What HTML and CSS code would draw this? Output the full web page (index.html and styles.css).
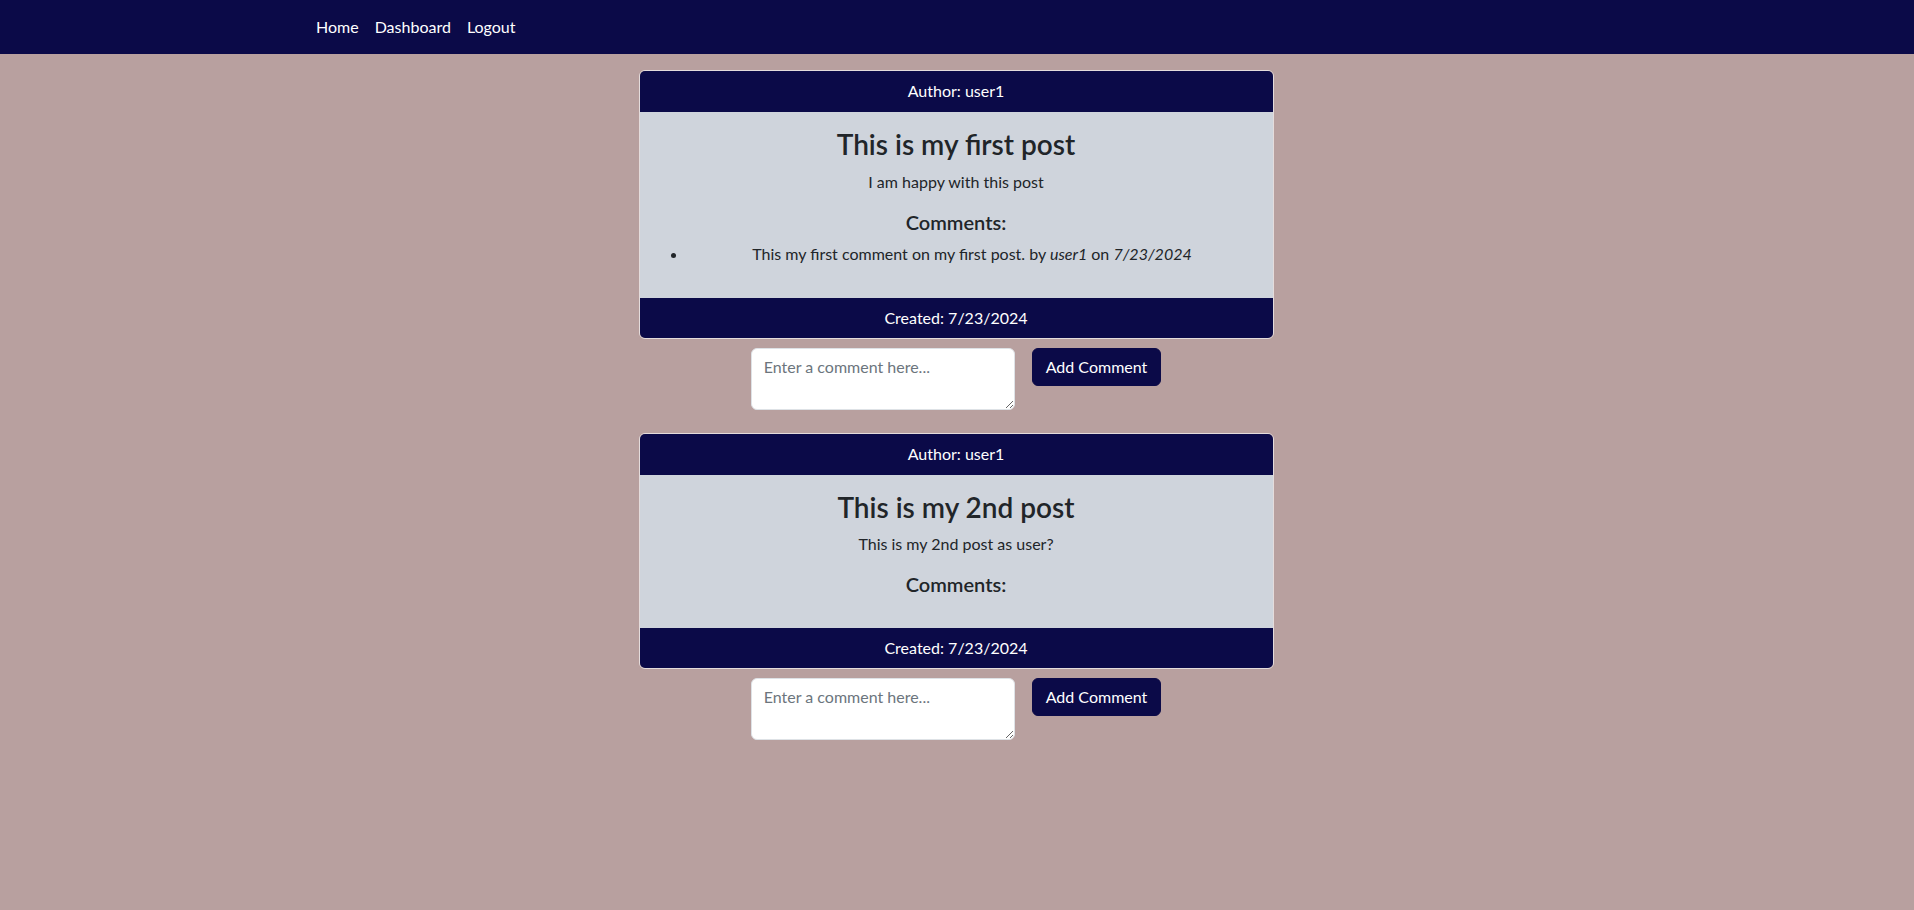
FILE: index.html
```html
<!DOCTYPE html>
<html lang="en">
<head>
<meta charset="utf-8">
<title>Posts</title>
<link rel="stylesheet" href="styles.css">
</head>
<body>
<nav class="navbar">
  <div class="nav-inner">
    <a class="nav-link" href="#">Home</a>
    <a class="nav-link" href="#">Dashboard</a>
    <a class="nav-link" href="#">Logout</a>
  </div>
</nav>
<main class="posts">
  <section class="post">
    <div class="card">
      <div class="card-header">Author: user1</div>
      <div class="card-body">
        <h3 class="post-title">This is my first post</h3>
        <p class="post-text">I am happy with this post</p>
        <h5 class="comments-title">Comments:</h5>
        <ul class="comments">
          <li>This my first comment on my first post. by <em>user1</em> on <em>7/23/2024</em></li>
        </ul>
      </div>
      <div class="card-footer">Created: 7/23/2024</div>
    </div>
    <form class="comment-form">
      <textarea class="comment-input" rows="2" placeholder="Enter a comment here..."></textarea>
      <button class="btn" type="button">Add Comment</button>
    </form>
  </section>
  <section class="post">
    <div class="card">
      <div class="card-header">Author: user1</div>
      <div class="card-body">
        <h3 class="post-title">This is my 2nd post</h3>
        <p class="post-text">This is my 2nd post as user?</p>
        <h5 class="comments-title">Comments:</h5>
        <ul class="comments"></ul>
      </div>
      <div class="card-footer">Created: 7/23/2024</div>
    </div>
    <form class="comment-form">
      <textarea class="comment-input" rows="2" placeholder="Enter a comment here..."></textarea>
      <button class="btn" type="button">Add Comment</button>
    </form>
  </section>
</main>
</body>
</html>
```

FILE: styles.css
```css
* { box-sizing: border-box; }

html, body {
  margin: 0;
  padding: 0;
}

body {
  min-height: 100vh;
  background: #b8a09f;
  color: #212529;
  font-family: "Segoe UI", "Lato", "Noto Sans", sans-serif;
  font-size: 16px;
  line-height: 1.5;
}

.navbar {
  background: #0b0a48;
  height: 54px;
  display: flex;
  align-items: center;
}

.nav-inner {
  width: 1320px;
  margin: 0 auto;
  padding: 0 11px;
  display: flex;
}

.nav-link {
  color: #ffffff;
  text-decoration: none;
  padding: 8px;
}

.posts {
  display: flex;
  flex-direction: column;
  align-items: center;
  padding-top: 16px;
  gap: 23px;
}

.post {
  width: 635px;
  display: flex;
  flex-direction: column;
  align-items: center;
  gap: 9px;
  margin-left: -2px;
}

.card {
  width: 100%;
  border: 1px solid #e4dcdc;
  border-radius: 6px;
  overflow: hidden;
  text-align: center;
}

.card-header,
.card-footer {
  background: #0b0a48;
  color: #ffffff;
  padding: 8px 16px;
}

.card-header { padding-bottom: 9px; }

.card-body {
  background: #cfd4dc;
  padding: 16px;
}

.post-title {
  margin: 0 0 8px;
  font-size: 28px;
  font-weight: 600;
  line-height: 1.2;
}

.post-text {
  margin: 0 0 16px;
}

.comments-title {
  margin: 0 0 8px;
  font-size: 20px;
  font-weight: 600;
  line-height: 1.2;
}

.comments {
  margin: 0 0 16px;
  padding-left: 32px;
}

.comment-form {
  display: flex;
  align-items: flex-start;
  gap: 17px;
}

.comment-input {
  width: 264px;
  height: 62px;
  padding: 6px 12px;
  font: inherit;
  color: #212529;
  background: #ffffff;
  border: 1px solid #dee2e6;
  border-radius: 6px;
  resize: vertical;
}

.comment-input::placeholder {
  color: #6c757d;
}

.btn {
  font: inherit;
  color: #ffffff;
  background: #0b0a48;
  border: 1px solid #0b0a48;
  border-radius: 6px;
  padding: 6px 13px;
  cursor: pointer;
}
```
